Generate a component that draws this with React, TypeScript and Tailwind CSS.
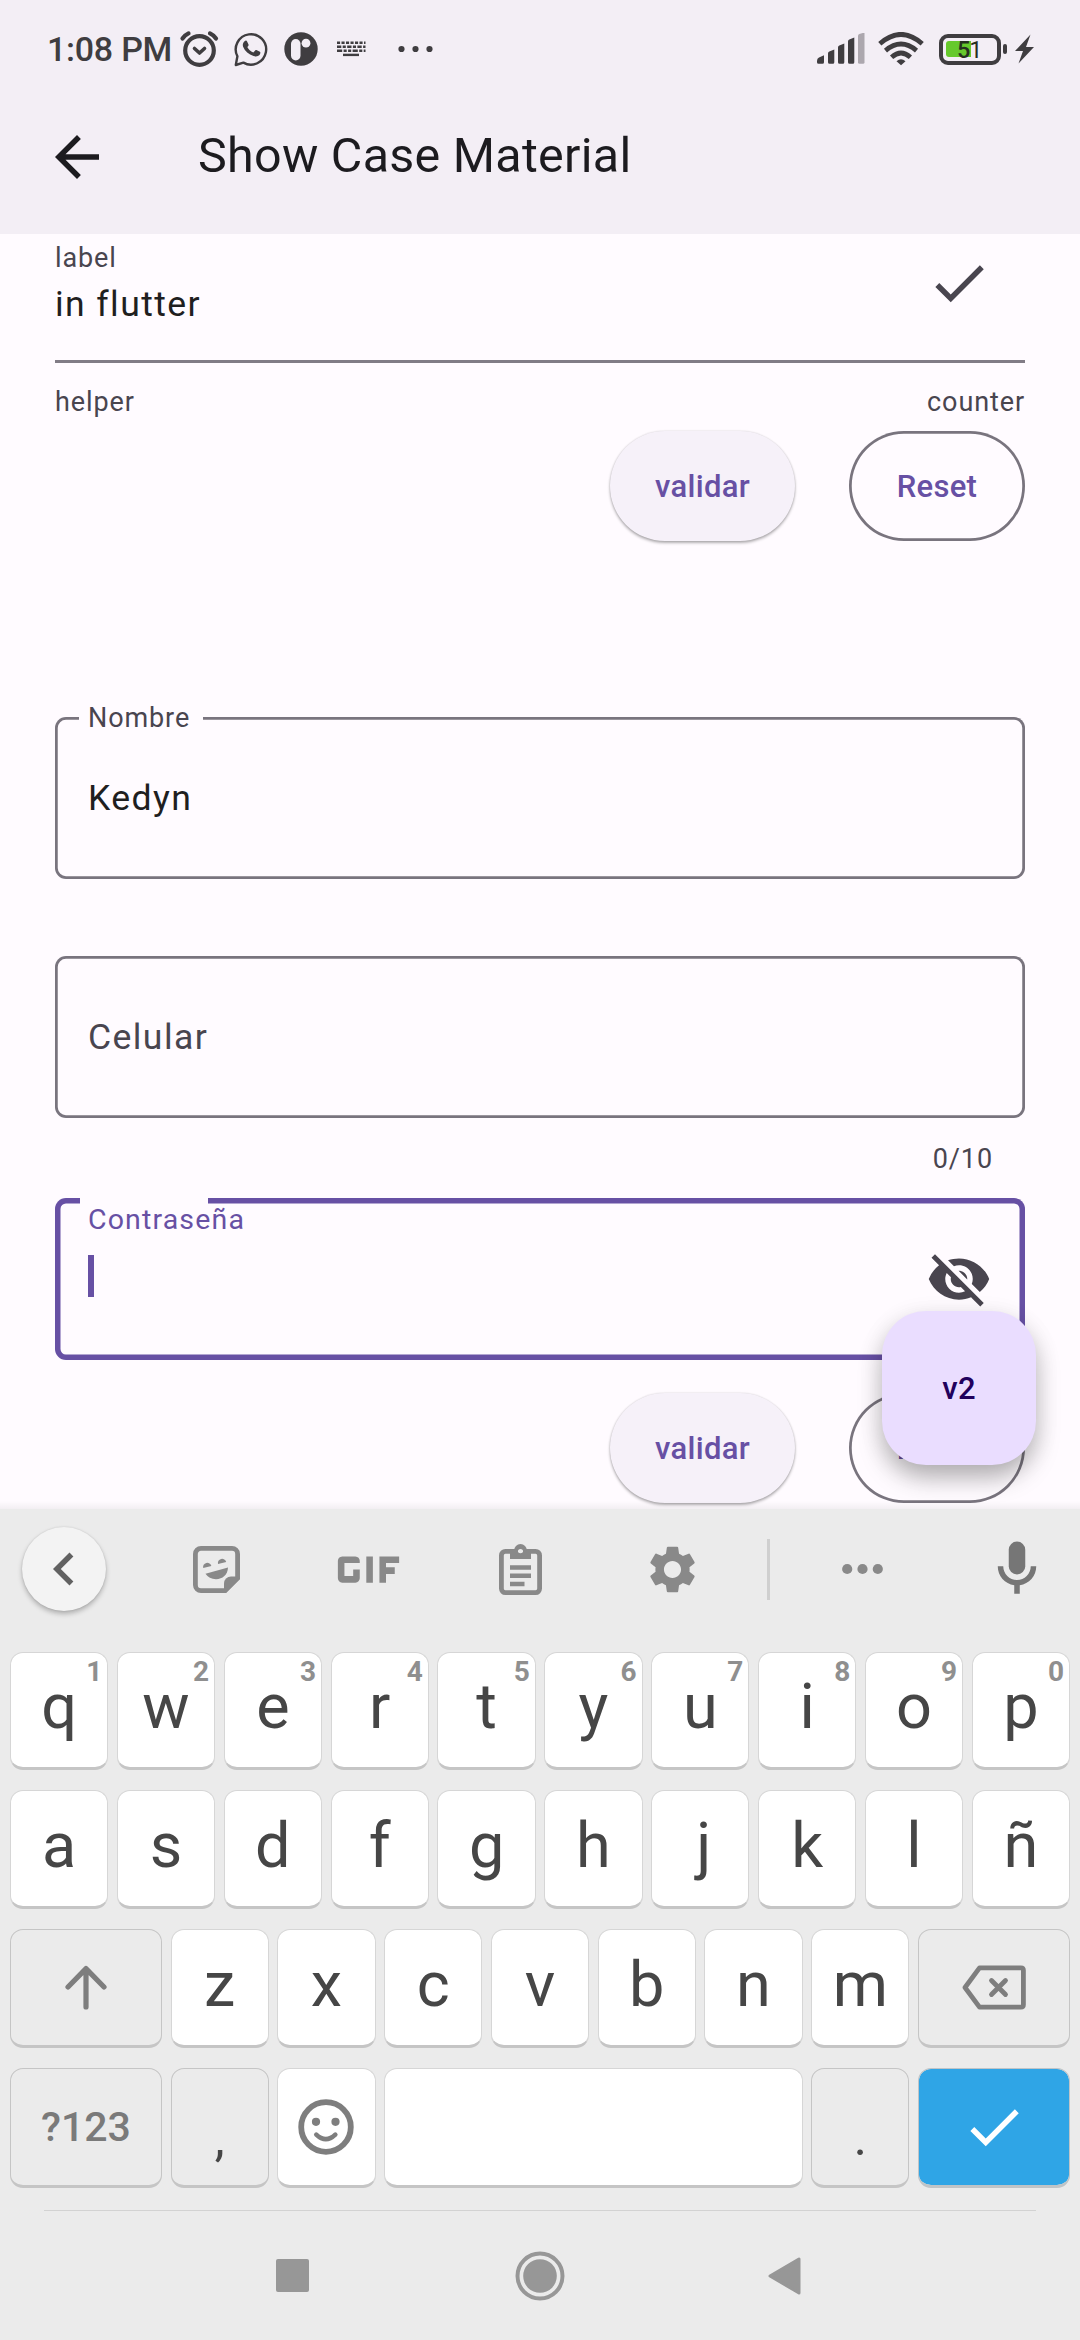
import type { ReactNode } from "react";
import {
  MdArrowBack,
  MdCheck,
  MdChevronLeft,
  MdGif,
  MdSettings,
  MdVisibilityOff,
} from "react-icons/md";

function StatusBar() {
  return (
    <div className="flex h-20 items-center pt-[18px] text-[#3f3d40]">
      <span className="ml-[47px] w-[132px] whitespace-nowrap text-[34px] leading-10 font-medium tracking-[-0.250px]">1:08 PM</span>
      <svg width="40" height="38" viewBox="0 0 40 38" fill="none" stroke="currentColor" strokeLinecap="round">
        <circle cx="20.5" cy="20.5" r="14.3" strokeWidth="4.2" />
        <path d="M15.5 18.5l5 4.5 5-4.5" strokeWidth="3.6" strokeLinejoin="round" />
        <path d="M3.5 8.5Q6 5 9.5 3.4M37 8.5Q34.5 5 31 3.4" strokeWidth="4.2" />
      </svg>
      <svg className="ml-[15px]" width="34" height="36" viewBox="0 0 34 36" fill="none" stroke="currentColor">
        <path d="M1.8 34l1.6-8.7a15.2 15.2 0 1 1 6 6.3z" strokeWidth="2.4" strokeLinejoin="round" />
        <path
          d="M10.6 10.2c1-.8 2-.8 2.5.2l1.4 3.2c.3.8-.2 1.3-1.2 2.5 1.3 2.6 3.200 4.300 6 5.500l1.900-2.200c.5-.5 1-.5 1.700-.2l3 1.500c.8.5.6 2.200-.4 3.300-1.300 1.400-3.600 1.800-6 1-4.800-1.500-8.500-4.600-10.400-9.200-.7-2-.1-4.300 1.500-5.600z"
          fill="currentColor"
          stroke="none"
        />
      </svg>
      <svg className="ml-4" width="34" height="34" viewBox="0 0 34 34">
        <circle cx="17" cy="17" r="16.700" fill="currentColor" />
        <rect x="7" y="7" width="9.500" height="21.500" rx="4.750" fill="#f3eef5" />
        <circle cx="22" cy="11.200" r="4.400" fill="#f3eef5" />
      </svg>
      <svg className="ml-[19px]" width="29" height="16" viewBox="0 0 29 16" fill="none" stroke="currentColor" strokeWidth="2.400">
        <path d="M0 1.700h28.500" strokeDasharray="3.100 1.400" />
        <path d="M0 5.700h28.500" strokeDasharray="4.300 1.400 3.100 1.400" />
        <path d="M0 9.700h28.500" strokeDasharray="5.200 1.400 3.100 1.400 3.100 1.400" />
        <path d="M6 13.900h16" />
      </svg>
      <svg className="ml-8" width="36" height="8" viewBox="0 0 36 8" fill="currentColor">
        <circle cx="3.500" cy="4" r="3.100" />
        <circle cx="17.500" cy="4" r="3.100" />
        <circle cx="31.500" cy="4" r="3.100" />
      </svg>
      <div className="ml-auto flex items-center">
        <svg width="48" height="32" viewBox="0 0 48 32" fill="currentColor">
          <path d="M0 28q0-3 2-3.500l5-2.300v7q0 1.500-1.500 1.500H1.500q-1.500 0-1.500-1.500z" />
          <path d="M11 20.500q0-1.500 1.300-2l5-2v12.700q0 1.500-1.500 1.500h-3.300q-1.500 0-1.500-1.500z" />
          <path d="M21 14.500q0-1.500 1.300-2l5-2v18.700q0 1.500-1.500 1.500h-3.300q-1.500 0-1.500-1.500z" />
          <path d="M31 8.500q0-1.500 1.300-2l5-2v24.700q0 1.500-1.500 1.500h-3.300q-1.500 0-1.500-1.500z" />
          <path d="M41 3q0-1.500 1.300-2l5.200-1.500v29.700q0 1.500-1.500 1.500h-3.500q-1.500 0-1.500-1.500z" fill="#aca7ae" />
        </svg>
        <svg className="ml-[13px]" width="46" height="34" viewBox="0 0 46 34" fill="none" stroke="currentColor" strokeWidth="4.800">
          <path d="M1.800 11.700q21.200-18.600 42.400 0" />
          <path d="M7.500 18.600q15.500-13 31 0" />
          <path d="M13.600 25.200q9.400-8.500 18.800 0" />
          <path d="M18.500 29.300q4.500-4.300 9 0l-4.500 4z" fill="currentColor" stroke="none" />
        </svg>
        <div className="ml-[15px] flex h-[31px] w-[62px] items-center rounded-[9px] border-4 border-current p-[3px]">
          <span className="relative h-[16px] w-[25px] rounded-l-[3px] bg-[#66c92c]">
            <span className="absolute top-[-3px] left-[11px] text-[23.500px] leading-[24px] tracking-[-1.200px] text-[#26301f]">
              <span className="font-medium">5</span>1
            </span>
          </span>
        </div>
        <span className="ml-[2px] h-[10px] w-1 rounded-full bg-current" />
        <svg className="mr-[46px] ml-2" width="19" height="30" viewBox="0 0 19 30" fill="currentColor">
          <path d="M15.500.5L0 17h8L3.500 29.500 19 13h-8z" />
        </svg>
      </div>
    </div>
  );
}

function FilledButton({ children }: { children: ReactNode }) {
  return (
    <button className="flex h-[110px] w-[185px] items-center justify-center rounded-full bg-[#f6f1f9] pt-[2px] text-[31px] leading-9 font-medium tracking-[0.280px] text-[#6750a4] shadow-[0_2px_3px_rgba(0,0,0,0.3),0_0_2px_rgba(0,0,0,0.15)]">
      {children}
    </button>
  );
}

function OutlinedButton({ children }: { children: ReactNode }) {
  return (
    <button className="flex h-[110px] w-[176px] items-center justify-center rounded-full pt-[2px] text-[31px] leading-9 font-medium tracking-[0.280px] text-[#6750a4] shadow-[inset_0_0_0_2.750px_#79747e]">
      {children}
    </button>
  );
}

function FormActions() {
  return (
    <div className="flex justify-end gap-[54px]">
      <FilledButton>validar</FilledButton>
      <OutlinedButton>Reset</OutlinedButton>
    </div>
  );
}

function Form() {
  return (
    <main className="relative h-[1275px] overflow-hidden bg-[#fffbff] px-[55px] text-[#49454f]">
      <div className="flex h-[129px] justify-between border-b-[3px] border-[#817c86]">
        <div className="pt-2">
          <div className="text-[27px] leading-8 tracking-[0.900px]">label</div>
          <div className="mt-2 text-[35.600px] leading-[44px] tracking-[1.400px] text-[#1f1f1f]">in flutter</div>
        </div>
        <MdCheck className="mt-4 mr-[33px] size-[66px]" />
      </div>
      <div className="mt-[23px] flex justify-between text-[27px] leading-8 tracking-[0.900px]">
        <span>helper</span>
        <span>counter</span>
      </div>
      <div className="mt-[13px]">
        <FormActions />
      </div>

      <div className="relative mt-[176px] flex h-[162px] items-center rounded-[11px] px-[33px] shadow-[inset_0_0_0_2.750px_#79747e]">
        <span className="absolute top-[-15px] left-[24px] w-[124px] bg-[#fffbff] pl-[9px] text-[27px] leading-8 tracking-[0.900px]">
          Nombre
        </span>
        <span className="text-[35.600px] leading-[44px] tracking-[1.400px] text-[#1f1f1f]">Kedyn</span>
      </div>

      <div className="mt-[77px] flex h-[162px] items-center rounded-[11px] px-[33px] shadow-[inset_0_0_0_2.750px_#79747e]">
        <span className="text-[35.600px] leading-[44px] tracking-[1.400px]">Celular</span>
      </div>
      <div className="mt-[25px] mb-[23px] pr-[32px] text-right text-[27px] leading-8 tracking-[0.900px]">0/10</div>

      <div className="relative flex h-[162px] justify-between rounded-[11px] px-[33px] shadow-[inset_0_0_0_5.500px_#6750a4]">
        <span className="absolute top-0 left-[25px] h-[6px] w-[128px] bg-[#fffbff]" />
        <div className="pt-[6px] text-[#6750a4]">
          <div className="text-[28.500px] leading-8 tracking-[1.150px]">Contraseña</div>
          <div className="mt-[19px] h-[42px] w-[5.500px] bg-[#6750a4]" />
        </div>
        <MdVisibilityOff className="mt-12 size-[66px]" />
      </div>
      <div className="mt-[33px]">
        <FormActions />
      </div>

      <button className="absolute right-[44px] bottom-[44px] flex size-[154px] items-center justify-center rounded-[44px] bg-[#eaddff] pt-[2px] text-[31px] leading-9 font-medium tracking-[0.280px] text-[#21005d] shadow-[0_14px_26px_-2px_rgba(0,0,0,0.28),0_6px_26px_rgba(0,0,0,0.09)]">
        v2
      </button>
      <div className="absolute inset-x-0 bottom-0 h-2 bg-linear-to-t from-black/5 to-transparent" />
    </main>
  );
}

function Toolbar() {
  return (
    <div className="flex h-[120px] items-center text-[#898989]">
      <button className="ml-[22px] flex size-[84px] items-center justify-center rounded-full bg-[#f3f3f3] text-[#616161] shadow-[0_3px_5px_rgba(0,0,0,0.25),0_0_2px_rgba(0,0,0,0.12)]">
        <MdChevronLeft className="size-[66px]" />
      </button>
      <svg className="ml-[87px]" width="47" height="47" viewBox="0 0 47 47" fill="currentColor">
        <path
          d="M8 2.400h31a5.600 5.600 0 0 1 5.600 5.600v24L32 44.600H8A5.600 5.600 0 0 1 2.400 39V8A5.600 5.600 0 0 1 8 2.400z"
          fill="none"
          stroke="currentColor"
          strokeWidth="4.800"
        />
        <path d="M31 47V37.500a7 7 0 0 1 7-7h9v2.500L33 47z" />
        <path d="M10.200 22a4.200 4.200 0 1 1 8.200-2zM25 18a4.200 4.200 0 1 1 8.200-2z" />
        <path d="M12.500 27.800L35 21.600c-.3 7.400-5.500 11.600-12 11.600-4.500 0-8.300-2-10.500-5.400z" />
      </svg>
      <MdGif className="ml-[76px] size-[105px]" />
      <svg className="ml-[78px]" width="43" height="51" viewBox="0 0 43 51" fill="none" stroke="currentColor">
        <rect x="2.400" y="7.400" width="38.200" height="41.200" rx="4" strokeWidth="4.800" />
        <path d="M11 5h6a6.800 6.800 0 0 1 9.500 0h5.500v10H11z" fill="currentColor" stroke="none" />
        <circle cx="21.500" cy="7.500" r="2.600" fill="#ebebeb" stroke="none" />
        <circle cx="21.500" cy="6.500" r="4.600" strokeWidth="3.600" />
        <path d="M11 23.500h21M11 31.800h21M11 40h14.500" strokeWidth="4.400" />
      </svg>
      <MdSettings className="ml-[102px] size-[57px]" />
      <span className="ml-[66px] h-[61px] w-[3px] bg-[#cfcfcf]" />
      <svg className="ml-[72px]" width="41" height="12" viewBox="0 0 41 12" fill="currentColor">
        <circle cx="5.200" cy="6" r="5.100" />
        <circle cx="20.500" cy="6" r="5.100" />
        <circle cx="35.800" cy="6" r="5.100" />
      </svg>
      <svg className="ml-[101px] size-[66px] text-[#767676]" viewBox="0 0 24 24" fill="currentColor">
        <rect x="9" y="2" width="6" height="12" rx="3" />
        <path d="M17 11c0 2.760-2.240 5-5 5s-5-2.240-5-5H5c0 3.530 2.610 6.430 6 6.920V21h2v-3.080c3.390-.49 6-3.390 6-6.920z" />
      </svg>
    </div>
  );
}

function Key({ children, hint }: { children?: ReactNode; hint?: string }) {
  return (
    <div className="relative flex flex-1 items-center justify-center rounded-[13px] border border-b-[3px] border-[#d6d6d6] border-b-[#c5c5c5] bg-white pb-[7px] text-[63px] leading-none text-[#464646]">
      {children === "j" ? <span className="pl-[7px]">j</span> : children}
      {hint && (
        <span className="absolute top-[3px] right-[5px] text-[28px] leading-8 font-bold text-[#8f8f8f]">{hint}</span>
      )}
    </div>
  );
}

function ToneKey({ children, wide }: { children?: ReactNode; wide?: boolean }) {
  return (
    <div
      className={
        (wide ? "w-[152px] " : "w-[98.200px] ") +
        "flex shrink-0 items-center justify-center rounded-[13px] border border-b-[3px] border-[#c5c5c5] text-[#7e7e7e]"
      }
    >
      {children}
    </div>
  );
}

function Keyboard() {
  const top = "qwertyuiop".split("");
  return (
    <section className="h-[701px] bg-[#ebebeb]">
      <Toolbar />
      <div className="flex flex-col gap-5 px-[10px] pt-[23px]">
        <div className="flex h-[118px] gap-[8.600px]">
          {top.map((letter, i) => (
            <Key key={letter} hint={String((i + 1) % 10)}>
              {letter}
            </Key>
          ))}
        </div>
        <div className="flex h-[119px] gap-[8.600px]">
          {"asdfghjklñ".split("").map((letter) => (
            <Key key={letter}>{letter}</Key>
          ))}
        </div>
        <div className="flex h-[119px] gap-[8.600px]">
          <ToneKey wide>
            <svg width="42" height="46" viewBox="0 0 42 46" fill="none" stroke="currentColor" strokeWidth="5.200" strokeLinecap="round" strokeLinejoin="round">
              <path d="M21 42V3.600M3 22L21 3.600 39 22" />
            </svg>
          </ToneKey>
          {"zxcvbnm".split("").map((letter) => (
            <Key key={letter}>{letter}</Key>
          ))}
          <ToneKey wide>
            <svg width="64" height="45" viewBox="0 0 64 45" fill="none" stroke="currentColor" strokeWidth="4.800" strokeLinejoin="round">
              <path d="M17.500 2.900H59q2.400 0 2.400 2.400v34.400q0 2.400-2.400 2.400H17.500L3 22.500z" />
              <path d="M29.500 15.500l14 14M43.500 15.500l-14 14" strokeLinecap="round" />
            </svg>
          </ToneKey>
        </div>
        <div className="flex h-[120px] gap-[8.600px]">
          <ToneKey wide>
            <span className="text-[41px] leading-none font-medium text-[#7a7a7a]">?123</span>
          </ToneKey>
          <ToneKey>
            <span className="pt-[22px] text-[50px] leading-none text-[#464646]">,</span>
          </ToneKey>
          <div className="flex w-[98.200px] shrink-0">
            <Key>
              <svg className="mt-[7px] text-[#7e7e7e]" width="56" height="56" viewBox="0 0 56 56" fill="none" stroke="currentColor">
                <circle cx="28" cy="28" r="24.800" strokeWidth="5.800" />
                <circle cx="18" cy="22.800" r="4.100" fill="currentColor" stroke="none" />
                <circle cx="37.500" cy="22.800" r="4.100" fill="currentColor" stroke="none" />
                <path d="M18.300 35.600q9.500 9 19 0" strokeWidth="4.600" strokeLinecap="round" />
              </svg>
            </Key>
          </div>
          <Key />
          <ToneKey>
            <span className="pt-[22px] text-[50px] leading-none text-[#464646]">.</span>
          </ToneKey>
          <div className="flex w-[152px] shrink-0 items-center justify-center rounded-[13px] border border-b-[3px] border-[#bfc4c7] bg-[#2fa5e6] bg-clip-padding text-white">
            <MdCheck className="size-[66px]" />
          </div>
        </div>
      </div>
    </section>
  );
}

function NavigationBar() {
  return (
    <nav className="h-[130px] bg-[#ebebeb] px-[44px] text-[#979797]">
      <div className="flex h-full items-center border-t border-[#d2d2d2]">
        <span className="ml-[232px] size-[33px] rounded-[2px] bg-current" />
        <svg className="ml-[206px]" width="50" height="50" viewBox="0 0 50 50" fill="currentColor">
          <circle cx="25" cy="25" r="22.500" fill="none" stroke="currentColor" strokeWidth="4" />
          <circle cx="25" cy="25" r="16.800" />
        </svg>
        <svg className="ml-[203px]" width="33" height="38" viewBox="0 0 33 38" fill="currentColor" stroke="currentColor" strokeWidth="3" strokeLinejoin="round">
          <path d="M2 19L31 2v34z" />
        </svg>
      </div>
    </nav>
  );
}

export default function App() {
  return (
    <div className="h-[2340px] w-[1080px] overflow-hidden bg-[#fffbff] font-['Roboto',sans-serif]">
      <header className="h-[234px] bg-[#f3eef5]">
        <StatusBar />
        <div className="flex h-[154px] items-center text-[#1c1b1f]">
          <MdArrowBack className="ml-[44px] size-[66px]" />
          <h1 className="ml-[88px] pb-[3px] text-[48.400px] leading-[60px] tracking-[0.300px]">Show Case Material</h1>
        </div>
      </header>
      <Form />
      <Keyboard />
      <NavigationBar />
    </div>
  );
}
